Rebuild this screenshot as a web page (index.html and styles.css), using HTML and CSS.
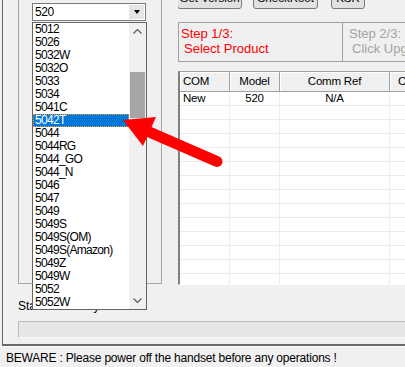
FILE: index.html
```html
<!DOCTYPE html>
<html lang="en">

<head>
    <meta charset="UTF-8">
    <title>Upgrade Tool</title>
    <link rel="stylesheet" href="styles.css">
</head>

<body>

    <div class="window">
        <div class="top-area">
            <div class="group">
                <div class="combo">
                    <span class="combo-text">520</span>
                    <span class="combo-btn"><span class="tri"></span></span>
                </div>
            </div>

            <div class="right">
                <div class="buttons">
                    <div class="btn btn-version">Get Version</div>
                    <div class="btn btn-root">CheckRoot</div>
                    <div class="btn btn-ksr">KSR</div>
                </div>

                <div class="steps">
                    <div class="step step-active">
                        <div>Step 1/3:</div>
                        <div class="step-sub">Select Product</div>
                    </div>
                    <div class="step step-next">
                        <div>Step 2/3:</div>
                        <div class="step-sub">Click Upgrade</div>
                    </div>
                </div>

                <div class="grid">
                    <div class="row head">
                        <div class="cell left">COM</div>
                        <div class="cell">Model</div>
                        <div class="cell">Comm Ref</div>
                        <div class="cell last">CU Ref</div>
                    </div>
                    <div class="row">
                        <div class="cell left">New</div>
                        <div class="cell">520</div>
                        <div class="cell">N/A</div>
                        <div class="cell"></div>
                    </div>
                    <div class="row"><div class="cell"></div><div class="cell"></div><div class="cell"></div><div class="cell"></div></div>
                    <div class="row"><div class="cell"></div><div class="cell"></div><div class="cell"></div><div class="cell"></div></div>
                    <div class="row"><div class="cell"></div><div class="cell"></div><div class="cell"></div><div class="cell"></div></div>
                    <div class="row"><div class="cell"></div><div class="cell"></div><div class="cell"></div><div class="cell"></div></div>
                    <div class="row"><div class="cell"></div><div class="cell"></div><div class="cell"></div><div class="cell"></div></div>
                    <div class="row"><div class="cell"></div><div class="cell"></div><div class="cell"></div><div class="cell"></div></div>
                    <div class="row"><div class="cell"></div><div class="cell"></div><div class="cell"></div><div class="cell"></div></div>
                    <div class="row"><div class="cell"></div><div class="cell"></div><div class="cell"></div><div class="cell"></div></div>
                    <div class="row"><div class="cell"></div><div class="cell"></div><div class="cell"></div><div class="cell"></div></div>
                    <div class="row"><div class="cell"></div><div class="cell"></div><div class="cell"></div><div class="cell"></div></div>
                    <div class="row"><div class="cell"></div><div class="cell"></div><div class="cell"></div><div class="cell"></div></div>
                    <div class="row"><div class="cell"></div><div class="cell"></div><div class="cell"></div><div class="cell"></div></div>
                    <div class="row"><div class="cell"></div><div class="cell"></div><div class="cell"></div><div class="cell"></div></div>
                </div>
            </div>
        </div>

        <div class="status-line">
            <span>Status:</span>
            <span class="ready">Ready.</span>
        </div>
        <div class="progress"></div>
    </div>

    <div class="statusbar">BEWARE : Please power off the handset before any operations !</div>

    <!-- open combo list, drawn over the window -->
    <div class="droplist">
        <div class="items">
            <div class="item">5012</div>
            <div class="item">5026</div>
            <div class="item">5032W</div>
            <div class="item">5032O</div>
            <div class="item">5033</div>
            <div class="item">5034</div>
            <div class="item">5041C</div>
            <div class="item selected">5042T</div>
            <div class="item">5044</div>
            <div class="item">5044RG</div>
            <div class="item">5044_GO</div>
            <div class="item">5044_N</div>
            <div class="item">5046</div>
            <div class="item">5047</div>
            <div class="item">5049</div>
            <div class="item">5049S</div>
            <div class="item">5049S(OM)</div>
            <div class="item">5049S(Amazon)</div>
            <div class="item">5049Z</div>
            <div class="item">5049W</div>
            <div class="item">5052</div>
            <div class="item">5052W</div>
        </div>
        <div class="scrollbar">
            <div class="sb-arrow">
                <svg width="9" height="5" viewBox="0 0 9 5"><polyline points="0.5,4.5 4.5,0.5 8.5,4.5" fill="none" stroke="#606060" stroke-width="1.3" /></svg>
            </div>
            <div class="sb-track">
                <div class="sb-thumb"></div>
            </div>
            <div class="sb-arrow">
                <svg width="9" height="5" viewBox="0 0 9 5"><polyline points="0.5,0.5 4.5,4.5 8.5,0.5" fill="none" stroke="#606060" stroke-width="1.3" /></svg>
            </div>
        </div>
    </div>

    <svg class="arrow" width="405" height="367" viewBox="0 0 405 367">
        <line x1="147" y1="131" x2="217" y2="161.5" stroke="#ff0000" stroke-width="11" stroke-linecap="round" />
        <polygon points="123,120 156,117 143,146" fill="#ff0000" />
    </svg>

</body>

</html>
```

FILE: styles.css
```css
body {
    margin: 0;
    width: 405px;
    height: 367px;
    overflow: hidden;
    position: relative;
    background: #f0f0f0;
    font-family: 'Liberation Sans', Arial, sans-serif;
    color: #000;
}

.window {
    margin-left: 2px;
    height: 344px;
    border-left: 1px solid #5b6f7c;
    border-bottom: 2px solid #6a6a6a;
    padding-left: 15px;
    display: flex;
    flex-direction: column;
}

.top-area {
    display: flex;
    height: 285px;
}

.group {
    width: 142px;
    height: 283px;
    border: 1px solid #a5a5a5;
    border-top: none;
    flex: none;
}

.combo {
    margin: 3px 0 0 13px;
    width: 112px;
    height: 16px;
    border: 1px solid #7a7a7a;
    background: white;
    display: flex;
    font-size: 12px;
    letter-spacing: -0.4px;
    line-height: 16px;
}

.combo-text {
    flex: 1;
    padding-left: 2px;
}

.combo-btn {
    width: 15px;
    height: 14px;
    margin: 1px 1px 0 0;
    background: #e5e5e5;
    display: flex;
    align-items: center;
    justify-content: center;
}

.tri {
    width: 0;
    height: 0;
    border-left: 3.5px solid transparent;
    border-right: 3.5px solid transparent;
    border-top: 4px solid #000;
}

.right {
    flex: 1;
    min-width: 0;
    margin-left: 16px;
    overflow: hidden;
}

.buttons {
    display: flex;
    margin-top: -13px;
    height: 22px;
}

.btn {
    height: 20px;
    border: 1px solid #7a7a7a;
    border-radius: 3px;
    background: #e1e1e1;
    font-size: 11.5px;
    line-height: 20px;
    text-align: center;
    flex: none;
}

.btn-version {
    width: 63px;
    margin-left: -1px;
}

.btn-root {
    width: 63px;
    margin-left: 11px;
}

.btn-ksr {
    width: 32px;
    margin-left: 13px;
}

.steps {
    display: flex;
    margin-top: 13px;
    height: 40px;
}

.step {
    flex: none;
    border: 1px solid #a0a0a0;
    font-size: 13px;
    line-height: 15px;
    padding-top: 3px;
    box-sizing: border-box;
    height: 40px;
}

.step-active {
    width: 165px;
    padding-left: 2px;
    color: #ff0000;
}

.step-next {
    width: 150px;
    border-left: none;
    padding-left: 6px;
    color: #a3a3a3;
}

.step-sub {
    padding-left: 3px;
}

.grid {
    margin-top: 9px;
    width: 330px;
    height: 212px;
    border-top: 1px solid #a0a0a0;
    border-left: 2px solid #808080;
    border-bottom: 1px solid #ffffff;
    background: white;
    overflow: hidden;
    font-size: 11.5px;
    letter-spacing: -0.2px;
}

.row {
    display: grid;
    grid-template-columns: 50px 50px 110px 118px;
    height: 14px;
    line-height: 13px;
}

.row .cell {
    border-right: 1px solid #ececec;
    border-bottom: 1px solid #ececec;
    text-align: center;
}

.row .cell.left {
    text-align: left;
    padding-left: 3px;
}

.row.head {
    height: 20px;
    line-height: 19px;
    background: #f0f0f0;
}

.row.head .cell {
    border-right: 1px solid #a0a0a0;
    border-bottom: 1px solid #a0a0a0;
    box-shadow: inset 1px 1px 0 #ffffff;
}

.row.head .cell.last {
    text-align: left;
    padding-left: 8px;
}

.status-line {
    margin-top: 14px;
    height: 14px;
    font-size: 12px;
    line-height: 14px;
}

.ready {
    margin-left: 6px;
}

.progress {
    margin-top: 8px;
    height: 15px;
    margin-right: -20px;
    border: 1px solid #bcbcbc;
    border-bottom-color: #fafafa;
    background: #e6e6e6;
}

.statusbar {
    border-top: 1px solid #fdfdfd;
    height: 20px;
    padding-left: 6px;
    padding-top: 2px;
    font-size: 12px;
    letter-spacing: -0.2px;
    line-height: 18px;
}

.droplist {
    position: absolute;
    left: 32px;
    top: 22px;
    width: 113px;
    height: 286px;
    border: 1px solid #646464;
    background: white;
    display: flex;
    z-index: 5;
}

.items {
    flex: 1;
    font-size: 12px;
    letter-spacing: -0.7px;
}

.item {
    height: 13px;
    line-height: 13px;
    padding-left: 2px;
    white-space: nowrap;
}

.item.selected {
    background: #0078d7;
    color: white;
    outline: 1px dotted #ff9b28;
    outline-offset: -1px;
}

.scrollbar {
    width: 17px;
    background: #f0f0f0;
    display: flex;
    flex-direction: column;
}

.sb-arrow {
    height: 17px;
    display: flex;
    align-items: center;
    justify-content: center;
}

.sb-track {
    flex: 1;
}

.sb-thumb {
    margin: 32px 1px 0 1px;
    height: 46px;
    background: #a6a6a6;
}

.arrow {
    position: absolute;
    left: 0;
    top: 0;
    z-index: 10;
    pointer-events: none;
}
```
